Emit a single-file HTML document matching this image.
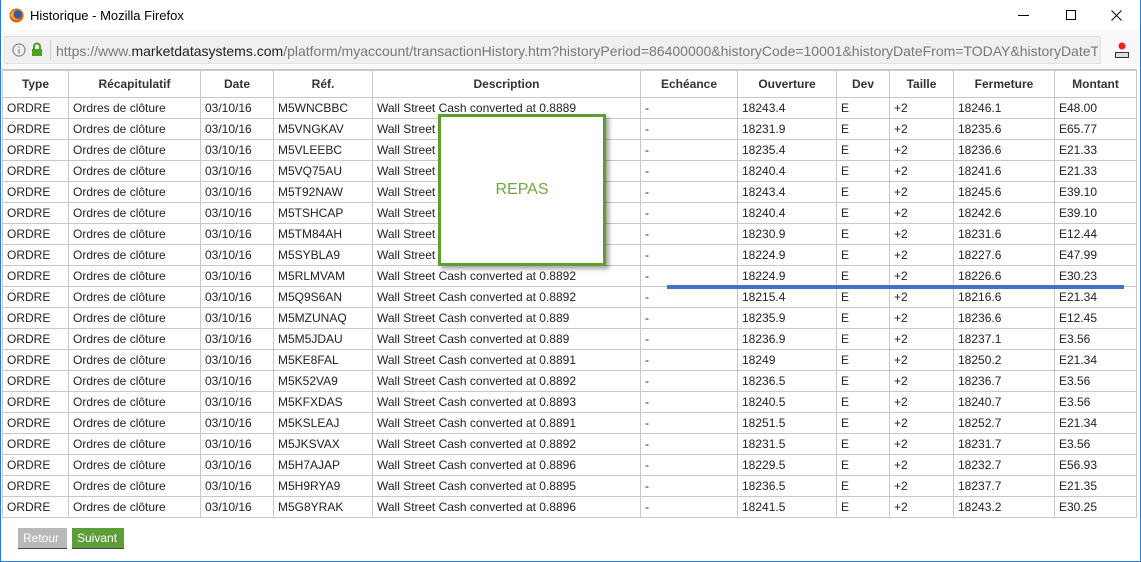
<!DOCTYPE html>
<html><head><meta charset="utf-8"><style>
*{margin:0;padding:0;box-sizing:border-box}
body{width:1141px;height:562px;overflow:hidden;background:#fff;position:relative;font-family:"Liberation Sans",Arial,sans-serif;font-size:12px;color:#222}
.win{position:absolute;left:0;top:0;width:1141px;height:562px;border:1px solid #2b79d6;border-top:none}
.title{position:absolute;left:30px;top:8px;font-size:13px;color:#000}
.tb{position:absolute;left:1px;top:31px;width:1138px;height:38px;background:#f9f9f9}
.url{position:absolute;left:4px;top:36px;width:1097px;height:28px;background:#f0f0f0;border:1px solid #e2e2e2;border-radius:2px}
.urltext{position:absolute;left:56px;top:43px;font-size:14px;color:#777;white-space:nowrap;width:1042px;overflow:hidden}
.urltext b{font-weight:normal;color:#222}
table{position:absolute;left:2px;top:69px;border-collapse:collapse;table-layout:fixed}
td,th{border:1px solid #c8c8c8;height:21px;padding:0 4px;white-space:nowrap;overflow:hidden;font-size:12px}
th{height:27px;font-weight:bold;text-align:center;color:#333}
tr:first-child th{border-top:2px solid #c8c8c8}
.box{position:absolute;left:438px;top:114px;width:168px;height:152px;background:#fff;border:3px solid #5e9e2f;box-shadow:3px 3px 4px rgba(0,0,0,.35);color:#6aab3a;font-size:16px;text-align:center;line-height:146px}
.line{position:absolute;left:667px;top:285px;width:457px;height:4px;background:#4472c4}
.btn{position:absolute;top:528px;height:21px;color:#fff;font-size:12px;line-height:20px;padding:0 5px;border-bottom:1px solid #444}
</style></head><body>
<div class="win"></div>
<svg style="position:absolute;left:9px;top:8px" width="15" height="15" viewBox="0 0 16 16"><circle cx="8" cy="8" r="7.5" fill="#e66000"/><circle cx="9" cy="7" r="4.5" fill="#2a5fa5"/><path d="M1 8 Q3 2 8 2 Q4 4 5 8 Q6 12 11 12 Q6 15 1 8Z" fill="#f3a73a"/></svg>
<div class="title">Historique - Mozilla Firefox</div>
<div style="position:absolute;left:1018px;top:15px;width:11px;height:1px;background:#000"></div>
<div style="position:absolute;left:1066px;top:10px;width:10px;height:10px;border:1px solid #000"></div>
<svg style="position:absolute;left:1111px;top:10px" width="11" height="11"><path d="M0.5 0.5L10.5 10.5M10.5 0.5L0.5 10.5" stroke="#000" stroke-width="1"/></svg>
<div class="tb"></div>
<div class="url"></div>
<svg style="position:absolute;left:12px;top:43px" width="14" height="14"><circle cx="7" cy="7" r="6" fill="none" stroke="#888" stroke-width="1.2"/><rect x="6.4" y="6" width="1.3" height="4.5" fill="#888"/><rect x="6.4" y="3.5" width="1.3" height="1.3" fill="#888"/></svg>
<svg style="position:absolute;left:31px;top:42px" width="12" height="14"><path d="M3 7V4.5a3 3 0 0 1 6 0V7" fill="none" stroke="#4ba21f" stroke-width="2"/><rect x="1" y="7" width="10" height="7" fill="#4ba21f"/></svg>
<div style="position:absolute;left:50px;top:40px;width:1px;height:20px;background:#ccc"></div>
<div class="urltext">https://www.<b>marketdatasystems.com</b>/platform/myaccount/transactionHistory.htm?historyPeriod=86400000&amp;historyCode=10001&amp;historyDateFrom=TODAY&amp;historyDateTo</div>
<svg style="position:absolute;left:1114px;top:41px" width="16" height="18"><circle cx="8" cy="5" r="3.5" fill="#e22"/><rect x="1.5" y="11.5" width="13" height="5" fill="#ddd" stroke="#333"/></svg>
<table>
<colgroup><col style="width:66px"><col style="width:132px"><col style="width:73px"><col style="width:99px"><col style="width:268px"><col style="width:97px"><col style="width:99px"><col style="width:53px"><col style="width:64px"><col style="width:101px"><col style="width:82px"></colgroup>
<tr><th>Type</th><th>Récapitulatif</th><th>Date</th><th>Réf.</th><th>Description</th><th>Echéance</th><th>Ouverture</th><th>Dev</th><th>Taille</th><th>Fermeture</th><th>Montant</th></tr>
<tr><td>ORDRE</td><td>Ordres de clôture</td><td>03/10/16</td><td>M5WNCBBC</td><td>Wall Street Cash converted at 0.8889</td><td>-</td><td>18243.4</td><td>E</td><td>+2</td><td>18246.1</td><td>E48.00</td></tr>
<tr><td>ORDRE</td><td>Ordres de clôture</td><td>03/10/16</td><td>M5VNGKAV</td><td>Wall Street Cash converted at 0.8889</td><td>-</td><td>18231.9</td><td>E</td><td>+2</td><td>18235.6</td><td>E65.77</td></tr>
<tr><td>ORDRE</td><td>Ordres de clôture</td><td>03/10/16</td><td>M5VLEEBC</td><td>Wall Street Cash converted at 0.8889</td><td>-</td><td>18235.4</td><td>E</td><td>+2</td><td>18236.6</td><td>E21.33</td></tr>
<tr><td>ORDRE</td><td>Ordres de clôture</td><td>03/10/16</td><td>M5VQ75AU</td><td>Wall Street Cash converted at 0.8889</td><td>-</td><td>18240.4</td><td>E</td><td>+2</td><td>18241.6</td><td>E21.33</td></tr>
<tr><td>ORDRE</td><td>Ordres de clôture</td><td>03/10/16</td><td>M5T92NAW</td><td>Wall Street Cash converted at 0.8889</td><td>-</td><td>18243.4</td><td>E</td><td>+2</td><td>18245.6</td><td>E39.10</td></tr>
<tr><td>ORDRE</td><td>Ordres de clôture</td><td>03/10/16</td><td>M5TSHCAP</td><td>Wall Street Cash converted at 0.8889</td><td>-</td><td>18240.4</td><td>E</td><td>+2</td><td>18242.6</td><td>E39.10</td></tr>
<tr><td>ORDRE</td><td>Ordres de clôture</td><td>03/10/16</td><td>M5TM84AH</td><td>Wall Street Cash converted at 0.8889</td><td>-</td><td>18230.9</td><td>E</td><td>+2</td><td>18231.6</td><td>E12.44</td></tr>
<tr><td>ORDRE</td><td>Ordres de clôture</td><td>03/10/16</td><td>M5SYBLA9</td><td>Wall Street Cash converted at 0.8889</td><td>-</td><td>18224.9</td><td>E</td><td>+2</td><td>18227.6</td><td>E47.99</td></tr>
<tr><td>ORDRE</td><td>Ordres de clôture</td><td>03/10/16</td><td>M5RLMVAM</td><td>Wall Street Cash converted at 0.8892</td><td>-</td><td>18224.9</td><td>E</td><td>+2</td><td>18226.6</td><td>E30.23</td></tr>
<tr><td>ORDRE</td><td>Ordres de clôture</td><td>03/10/16</td><td>M5Q9S6AN</td><td>Wall Street Cash converted at 0.8892</td><td>-</td><td>18215.4</td><td>E</td><td>+2</td><td>18216.6</td><td>E21.34</td></tr>
<tr><td>ORDRE</td><td>Ordres de clôture</td><td>03/10/16</td><td>M5MZUNAQ</td><td>Wall Street Cash converted at 0.889</td><td>-</td><td>18235.9</td><td>E</td><td>+2</td><td>18236.6</td><td>E12.45</td></tr>
<tr><td>ORDRE</td><td>Ordres de clôture</td><td>03/10/16</td><td>M5M5JDAU</td><td>Wall Street Cash converted at 0.889</td><td>-</td><td>18236.9</td><td>E</td><td>+2</td><td>18237.1</td><td>E3.56</td></tr>
<tr><td>ORDRE</td><td>Ordres de clôture</td><td>03/10/16</td><td>M5KE8FAL</td><td>Wall Street Cash converted at 0.8891</td><td>-</td><td>18249</td><td>E</td><td>+2</td><td>18250.2</td><td>E21.34</td></tr>
<tr><td>ORDRE</td><td>Ordres de clôture</td><td>03/10/16</td><td>M5K52VA9</td><td>Wall Street Cash converted at 0.8892</td><td>-</td><td>18236.5</td><td>E</td><td>+2</td><td>18236.7</td><td>E3.56</td></tr>
<tr><td>ORDRE</td><td>Ordres de clôture</td><td>03/10/16</td><td>M5KFXDAS</td><td>Wall Street Cash converted at 0.8893</td><td>-</td><td>18240.5</td><td>E</td><td>+2</td><td>18240.7</td><td>E3.56</td></tr>
<tr><td>ORDRE</td><td>Ordres de clôture</td><td>03/10/16</td><td>M5KSLEAJ</td><td>Wall Street Cash converted at 0.8891</td><td>-</td><td>18251.5</td><td>E</td><td>+2</td><td>18252.7</td><td>E21.34</td></tr>
<tr><td>ORDRE</td><td>Ordres de clôture</td><td>03/10/16</td><td>M5JKSVAX</td><td>Wall Street Cash converted at 0.8892</td><td>-</td><td>18231.5</td><td>E</td><td>+2</td><td>18231.7</td><td>E3.56</td></tr>
<tr><td>ORDRE</td><td>Ordres de clôture</td><td>03/10/16</td><td>M5H7AJAP</td><td>Wall Street Cash converted at 0.8896</td><td>-</td><td>18229.5</td><td>E</td><td>+2</td><td>18232.7</td><td>E56.93</td></tr>
<tr><td>ORDRE</td><td>Ordres de clôture</td><td>03/10/16</td><td>M5H9RYA9</td><td>Wall Street Cash converted at 0.8895</td><td>-</td><td>18236.5</td><td>E</td><td>+2</td><td>18237.7</td><td>E21.35</td></tr>
<tr><td>ORDRE</td><td>Ordres de clôture</td><td>03/10/16</td><td>M5G8YRAK</td><td>Wall Street Cash converted at 0.8896</td><td>-</td><td>18241.5</td><td>E</td><td>+2</td><td>18243.2</td><td>E30.25</td></tr>
</table>
<div class="box">REPAS</div>
<div class="line"></div>
<div class="btn" style="left:18px;width:49px;background:#b9b9b9">Retour</div>
<div class="btn" style="left:72px;width:52px;background:#5e9e3a">Suivant</div>
</body></html>
